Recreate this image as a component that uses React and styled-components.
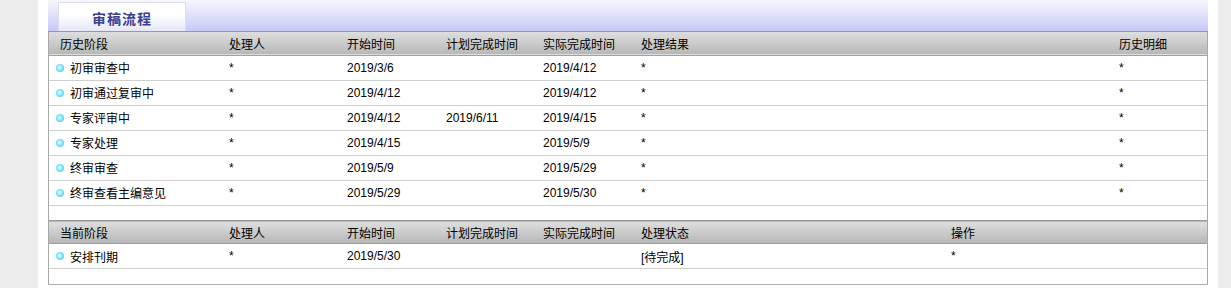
import React from "react";
import styled, { createGlobalStyle } from "styled-components";

const GlobalStyle = createGlobalStyle`
    body {
        margin: 0;
        background: #ededed;
        font-family: "Liberation Sans", "Noto Sans CJK SC", sans-serif;
        font-size: 12px;
        color: #000;
    }
`

const Page = styled.div`
    margin-left: 38px;
    width: 1180px;
    padding: 0 10px 2px;
    box-sizing: border-box;
    background: #fff;
    min-height: 288px;
`

const TabBar = styled.div`
    display: flex;
    height: 31px;
    background: linear-gradient(#f7f7fd, #c6c9f6);
    padding-left: 10px;
    box-sizing: border-box;
    align-items: flex-end;
`

const Tab = styled.div`
    width: 128px;
    height: 29px;
    box-sizing: border-box;
    border: 1px solid #dcdcea;
    border-bottom: none;
    background: linear-gradient(#ffffff 40%, #e6e7f8);
    display: flex;
    align-items: center;
    justify-content: center;
    padding-top: 2px;
    font-family: "Noto Sans CJK SC", sans-serif;
    font-size: 14px;
    font-weight: bold;
    letter-spacing: 1px;
    color: #3b3e92;
`

const Panel = styled.div`
    border: 1px solid #a8a8a8;
    border-top: 1px solid #999;
    border-bottom: 1px solid #b0b0b0;
`

const Table = styled.table`
    width: 100%;
    table-layout: fixed;
    border-collapse: collapse;
`

const HeadRow = styled.tr`
    height: 23px;
    background: linear-gradient(#dedede, #b8b8b8);
    border-top: ${p => (p.$first ? "none" : "1px solid #999")};
    border-bottom: 1px solid #a0a0a0;
`

const Th = styled.th`
    padding: 0 0 0 11px;
    text-align: left;
    font-weight: normal;
    white-space: nowrap;
    vertical-align: middle;
`

const Row = styled.tr`
    height: 25px;
    border-bottom: 1px solid #cfcfcf;
`

const BlankRow = styled.tr`
    height: 15px;
`

const Td = styled.td`
    padding: 0 0 0 11px;
    white-space: nowrap;
    vertical-align: middle;
`

const StageCell = styled.td`
    padding: 0 0 0 7px;
    white-space: nowrap;
    vertical-align: middle;
`

const Stage = styled.span`
    display: flex;
    align-items: center;
    gap: 6px;
`

const Dot = styled.span`
    width: 8px;
    height: 8px;
    border-radius: 50%;
    background: radial-gradient(circle at 45% 45%, #f0fdff 0%, #8ae8fc 40%, #2fbbea 100%);
`

const history = [
    ["初审审查中", "*", "2019/3/6", "", "2019/4/12", "*", "*"],
    ["初审通过复审中", "*", "2019/4/12", "", "2019/4/12", "*", "*"],
    ["专家评审中", "*", "2019/4/12", "2019/6/11", "2019/4/15", "*", "*"],
    ["专家处理", "*", "2019/4/15", "", "2019/5/9", "*", "*"],
    ["终审审查", "*", "2019/5/9", "", "2019/5/29", "*", "*"],
    ["终审查看主编意见", "*", "2019/5/29", "", "2019/5/30", "*", "*"],
]

const current = [
    ["安排刊期", "*", "2019/5/30", "", "", "[待完成]", "*"],
]

const Section = ({ widths, heads, rows, first }) => (
    <Table>
        <colgroup>
            {widths.map((w, i) => <col key={i} style={w ? { width: w } : undefined} />)}
        </colgroup>
        <tbody>
            <HeadRow $first={first}>
                {heads.map(h => <Th key={h}>{h}</Th>)}
            </HeadRow>
            {rows.map((r, i) => (
                <Row key={i}>
                    <StageCell>
                        <Stage><Dot />{r[0]}</Stage>
                    </StageCell>
                    {r.slice(1).map((c, j) => <Td key={j}>{c}</Td>)}
                </Row>
            ))}
            <BlankRow><td colSpan={7} /></BlankRow>
        </tbody>
    </Table>
)

export default function App() {
    return (
        <>
            <GlobalStyle />
            <Page>
                <TabBar>
                    <Tab>审稿流程</Tab>
                </TabBar>
                <Panel>
                    <Section
                        first
                        widths={[169, 118, 99, 97, 98, 478, null]}
                        heads={["历史阶段", "处理人", "开始时间", "计划完成时间", "实际完成时间", "处理结果", "历史明细"]}
                        rows={history}
                    />
                    <Section
                        widths={[169, 118, 99, 97, 98, 310, null]}
                        heads={["当前阶段", "处理人", "开始时间", "计划完成时间", "实际完成时间", "处理状态", "操作"]}
                        rows={current}
                    />
                </Panel>
            </Page>
        </>
    )
}
